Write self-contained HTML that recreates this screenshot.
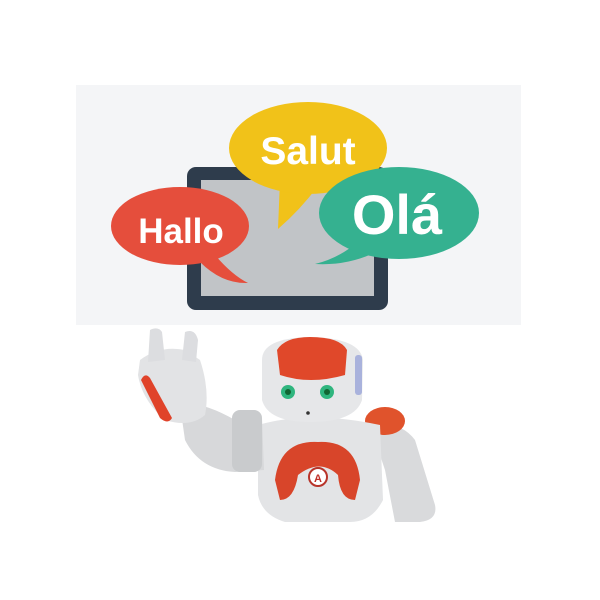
<!DOCTYPE html>
<html><head><style>
html,body{margin:0;padding:0;background:#fff;width:600px;height:600px;overflow:hidden}
svg{display:block}
text{font-family:"Liberation Sans",sans-serif;font-weight:bold;fill:#fff}
</style></head><body>
<svg width="600" height="600" viewBox="0 0 600 600">
<rect x="76" y="85" width="445" height="240" fill="#f4f5f7"/>
<rect x="187" y="167" width="201" height="143" rx="9" fill="#2e3c4c"/>
<rect x="201" y="180" width="173" height="116" fill="#c1c4c7"/>
<path d="M215,255 Q232,275 248,283 Q222,284 200,262 Z" fill="#e54e3c"/>
<ellipse cx="180" cy="226" rx="69" ry="39" fill="#e54e3c"/>
<text x="181" y="243" font-size="35" text-anchor="middle">Hallo</text>
<path d="M280,180 L278,229 Q300,210 318,186 Z" fill="#f1c219"/>
<ellipse cx="308" cy="148" rx="79" ry="46" fill="#f1c219"/>
<text x="308" y="164" font-size="39" text-anchor="middle">Salut</text>
<path d="M360,240 Q340,258 315,264 Q350,266 380,250 Z" fill="#35b190"/>
<ellipse cx="399" cy="213" rx="80" ry="46" fill="#35b190"/>
<text x="397" y="234" font-size="56" text-anchor="middle">Olá</text>
<g>
<path d="M370,425 Q400,420 415,440 L435,505 Q438,520 420,522 L395,522 L385,470 Z" fill="#d9dadc"/>
<ellipse cx="385" cy="421" rx="20" ry="14" fill="#e0532c"/>
<path d="M258,425 Q310,410 380,425 L383,500 Q372,522 350,522 L285,522 Q262,515 258,495 Z" fill="#e3e4e6"/>
<path d="M275,480 Q280,440 318,442 Q356,440 360,480 L355,500 Q340,500 338,475 Q320,458 298,475 Q294,500 280,500 Z" fill="#d8452a"/>
<circle cx="318" cy="477" r="9" fill="#fff" stroke="#b8342a" stroke-width="2"/>
<text x="318" y="482" font-size="11" text-anchor="middle" style="fill:#c03028">A</text>
<path d="M180,405 Q200,400 235,420 L262,418 L264,470 L235,472 Q200,470 185,440 Z" fill="#d7d8da"/>
<rect x="232" y="410" width="30" height="62" rx="8" fill="#c9cbcd"/>
<path d="M140,360 Q160,345 185,350 L200,360 Q210,390 205,415 Q190,428 165,420 Q142,400 138,375 Z" fill="#e2e3e5"/>
<path d="M150,330 Q158,326 162,332 L165,360 L148,362 Z" fill="#dcdde0"/>
<path d="M185,332 Q195,328 198,340 L196,362 L182,360 Z" fill="#dcdde0"/>
<path d="M141,380 Q145,372 150,378 L172,418 Q168,425 160,418 Z" fill="#e0432a"/>
<path d="M262,360 Q262,338 310,337 Q360,338 363,360 L362,400 Q355,422 310,422 Q268,422 262,400 Z" fill="#e6e7e9"/>
<path d="M277,350 Q285,337 310,337 Q340,337 347,350 L345,375 Q310,385 280,375 Z" fill="#e0482a"/>
<rect x="355" y="355" width="7" height="40" rx="3" fill="#a9b2dc"/>
<circle cx="288" cy="392" r="7" fill="#2fb57e"/>
<circle cx="288" cy="392" r="3" fill="#163"/>
<circle cx="327" cy="392" r="7" fill="#2fb57e"/>
<circle cx="327" cy="392" r="3" fill="#163"/>
<circle cx="308" cy="413" r="1.8" fill="#333"/>
</g>
</svg>
</body></html>
